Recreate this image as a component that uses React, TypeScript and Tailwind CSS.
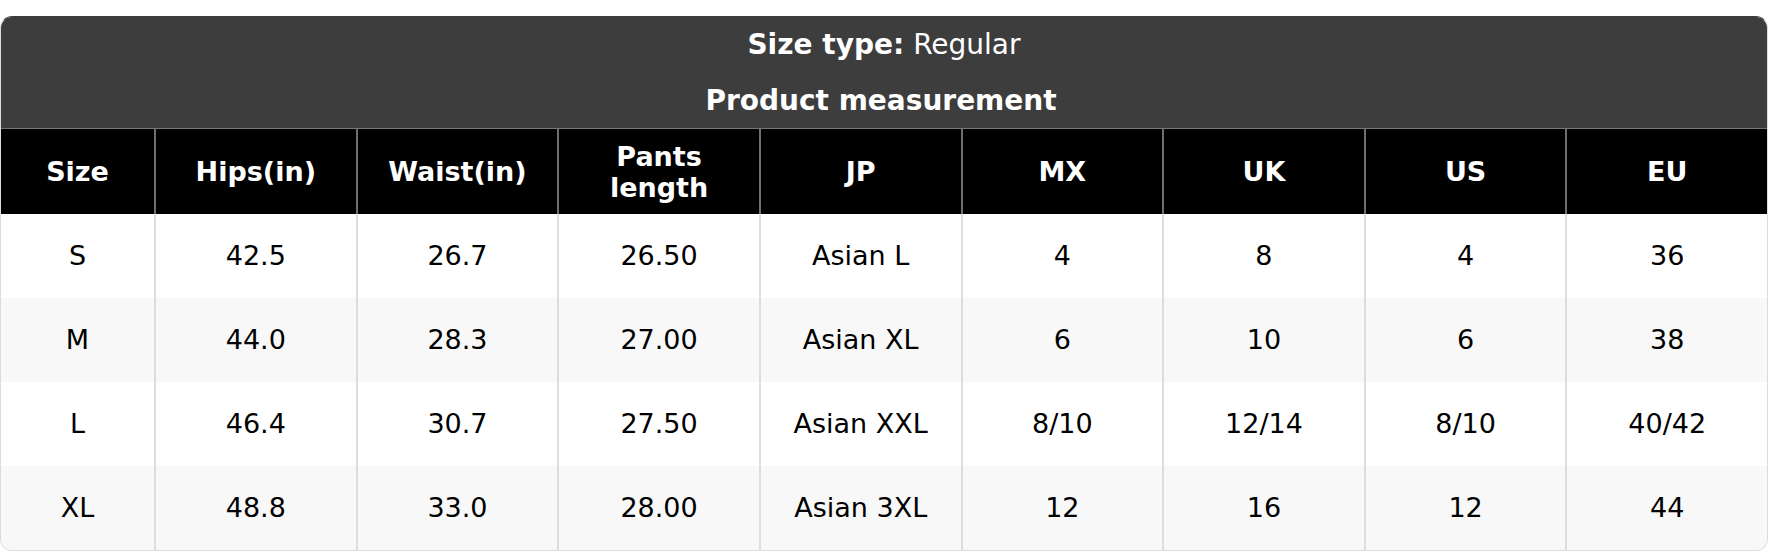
const columns = ["Size", "Hips(in)", "Waist(in)", "Pants length", "JP", "MX", "UK", "US", "EU"];

const rows = [
  ["S", "42.5", "26.7", "26.50", "Asian L", "4", "8", "4", "36"],
  ["M", "44.0", "28.3", "27.00", "Asian XL", "6", "10", "6", "38"],
  ["L", "46.4", "30.7", "27.50", "Asian XXL", "8/10", "12/14", "8/10", "40/42"],
  ["XL", "48.8", "33.0", "28.00", "Asian 3XL", "12", "16", "12", "44"],
];

export default function App() {
  return (
    <div className="min-h-[552px] bg-white pt-4 font-['DejaVu_Sans',sans-serif]">
      <div className="w-[1768px] overflow-hidden rounded-xl border border-[#dcdcdc] border-t-[#3d3d3d]">
        <div className="bg-[#3d3d3d] text-[28px] text-white">
          <div className="flex h-[56px] items-center justify-center">
            <span className="font-bold">Size type:</span>
            <span className="ml-[9px]">Regular</span>
          </div>
          <div className="flex h-[55px] items-center justify-center pr-[6px] font-bold">
            Product measurement
          </div>
        </div>
        <div className="grid grid-cols-[153px_repeat(8,1fr)] border-t border-[#777777]">
          {columns.map((col, i) => (
            <div
              key={col}
              className={`flex h-[85px] items-center justify-center bg-black px-2 text-center text-[27px] leading-[31px] font-bold text-white ${
                i > 0 ? "border-l-2 border-[#6f6f6f]" : ""
              }`}
            >
              <span className="w-[140px]">{col}</span>
            </div>
          ))}
          {rows.map((row, r) =>
            row.map((cell, i) => (
              <div
                key={`${r}-${i}`}
                className={`flex h-[84px] items-center justify-center text-[27px] text-black ${
                  r % 2 === 1 ? "bg-[#f8f8f8]" : "bg-white"
                } ${i > 0 ? "border-l-2 border-[#dddddd]" : ""}`}
              >
                {cell}
              </div>
            )),
          )}
        </div>
      </div>
    </div>
  );
}
